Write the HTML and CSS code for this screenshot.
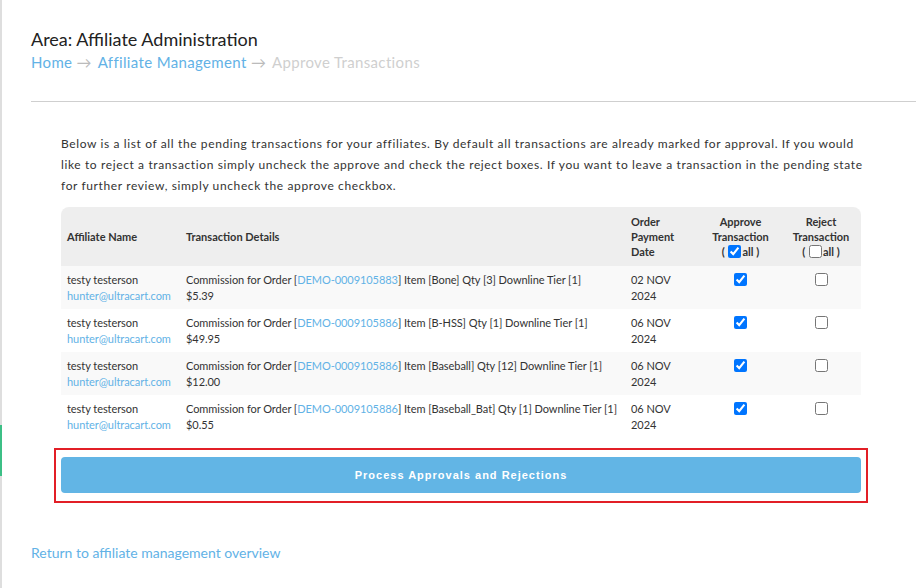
FILE: index.html
```html
<!DOCTYPE html>
<html lang="en">
<head>
  <meta charset="UTF-8">
  <meta name="viewport" content="width=device-width, initial-scale=1.0">
  <title>Approve Transactions</title>
  <link rel="stylesheet" href="styles.css">
</head>
<body>
  <div class="page">
    <h1 class="area-title">Area: Affiliate Administration</h1>
    <div class="breadcrumb">
      <a href="#">Home</a> <span class="arrow">&rarr;</span>
      <a href="#">Affiliate Management</a> <span class="arrow">&rarr;</span>
      <span class="current">Approve Transactions</span>
    </div>
    <hr class="divider">

    <div class="panel">
      <p class="intro">Below is a list of all the pending transactions for your affiliates. By default all transactions are already marked for approval. If you would like to reject a transaction simply uncheck the approve and check the reject boxes. If you want to leave a transaction in the pending state for further review, simply uncheck the approve checkbox.</p>

      <table class="tx-table">
        <colgroup>
          <col class="c-name">
          <col class="c-details">
          <col class="c-date">
          <col class="c-approve">
          <col class="c-reject">
        </colgroup>
        <thead>
          <tr>
            <th>Affiliate Name</th>
            <th>Transaction Details</th>
            <th>Order Payment Date</th>
            <th class="center">Approve Transaction<br>( <input type="checkbox" checked>all )</th>
            <th class="center">Reject Transaction<br>( <input type="checkbox">all )</th>
          </tr>
        </thead>
        <tbody>
          <tr>
            <td>testy testerson<br><a href="#">hunter@ultracart.com</a></td>
            <td>Commission for Order [<a href="#">DEMO-0009105883</a>] Item [Bone] Qty [3] Downline Tier [1]<br>$5.39</td>
            <td>02 NOV 2024</td>
            <td class="center"><input type="checkbox" checked></td>
            <td class="center"><input type="checkbox"></td>
          </tr>
          <tr>
            <td>testy testerson<br><a href="#">hunter@ultracart.com</a></td>
            <td>Commission for Order [<a href="#">DEMO-0009105886</a>] Item [B-HSS] Qty [1] Downline Tier [1]<br>$49.95</td>
            <td>06 NOV 2024</td>
            <td class="center"><input type="checkbox" checked></td>
            <td class="center"><input type="checkbox"></td>
          </tr>
          <tr>
            <td>testy testerson<br><a href="#">hunter@ultracart.com</a></td>
            <td>Commission for Order [<a href="#">DEMO-0009105886</a>] Item [Baseball] Qty [12] Downline Tier [1]<br>$12.00</td>
            <td>06 NOV 2024</td>
            <td class="center"><input type="checkbox" checked></td>
            <td class="center"><input type="checkbox"></td>
          </tr>
          <tr>
            <td>testy testerson<br><a href="#">hunter@ultracart.com</a></td>
            <td>Commission for Order [<a href="#">DEMO-0009105886</a>] Item [Baseball_Bat] Qty [1] Downline Tier [1]<br>$0.55</td>
            <td>06 NOV 2024</td>
            <td class="center"><input type="checkbox" checked></td>
            <td class="center"><input type="checkbox"></td>
          </tr>
        </tbody>
      </table>

      <div class="submit-frame">
        <button type="button" class="btn-process">Process Approvals and Rejections</button>
      </div>
    </div>

    <a href="#" class="back-link">Return to affiliate management overview</a>
  </div>
</body>
</html>
```

FILE: styles.css
```css
body {
  margin: 0;
  font-family: Lato, "Noto Sans", sans-serif;
  color: #222;
  background: #fff;
}
a {
  color: #62b2e6;
  text-decoration: none;
}
.page {
  position: relative;
  min-height: 588px;
  box-sizing: border-box;
  border-left: 2px solid #dedede;
  padding: 28px 0 0 29px;
}
.page::before {
  content: "";
  position: absolute;
  left: -2px;
  top: 425px;
  width: 2px;
  height: 51px;
  background: #3cbf86;
}
.area-title {
  font-size: 18px;
  font-weight: 400;
  line-height: 22px;
  margin: 0;
  color: #222;
}
.breadcrumb {
  font-size: 15px;
  line-height: 20px;
  margin-top: 2px;
  letter-spacing: 0.35px;
}
.breadcrumb .arrow {
  color: #bbb;
  margin-right: 2px;
}
.breadcrumb .current {
  color: #cfcfcf;
}
.divider {
  border: 0;
  border-top: 1px solid #cfcfcf;
  margin: 29px 0 0 0;
}
.panel {
  padding: 0 55px 0 30px;
}
.intro {
  font-size: 12px;
  line-height: 21px;
  letter-spacing: 0.62px;
  color: #333;
  margin: 31px -10px 11px 0;
}
.tx-table {
  width: 800px;
  table-layout: fixed;
  border-collapse: separate;
  border-spacing: 0;
  font-size: 11px;
  color: #333;
}
.c-name { width: 119px; }
.c-details { width: 445px; }
.c-date { width: 75px; }
.c-approve { width: 81px; }
.c-reject { width: 80px; }
.tx-table th {
  background: #eeeeee;
  text-align: left;
  font-weight: 700;
  line-height: 15px;
  padding: 7px 6px 7px 6px;
  vertical-align: middle;
}
.tx-table th:first-child {
  border-top-left-radius: 8px;
}
.tx-table th:last-child {
  border-top-right-radius: 8px;
}
.tx-table td {
  line-height: 16px;
  letter-spacing: -0.06px;
  padding: 6px 6px 5px 6px;
  vertical-align: top;
}
.tx-table td:nth-child(2) {
  padding-right: 2px;
}
.tx-table tbody tr:nth-child(odd) td {
  background: #f9f9f9;
}
.tx-table .center {
  text-align: center;
}
.tx-table input[type="checkbox"] {
  width: 13px;
  height: 13px;
  margin: 0 1px;
  vertical-align: -2px;
}
.tx-table td input[type="checkbox"] {
  margin-top: 1px;
}
.submit-frame {
  margin: 10px -7px 0 -7px;
  border: 2px solid #e21f26;
  padding: 7px 5px 8px 5px;
}
.btn-process {
  display: block;
  width: 100%;
  height: 36px;
  border: 0;
  border-radius: 4px;
  background: #62b5e5;
  color: #fff;
  font-family: "Liberation Sans", Arial, sans-serif;
  font-size: 11px;
  font-weight: 700;
  letter-spacing: 1px;
}
.back-link {
  display: inline-block;
  margin-top: 41px;
  font-size: 14px;
  line-height: 18px;
}
```
